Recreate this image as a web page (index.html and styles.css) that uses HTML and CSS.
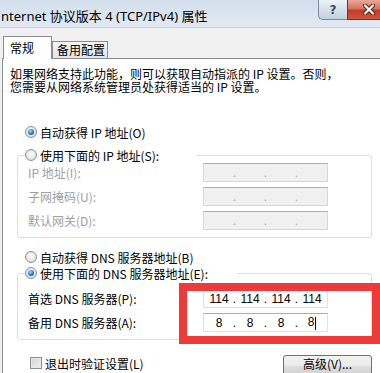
FILE: index.html
```html
<!DOCTYPE html>
<html lang="zh-CN">
<head>
  <meta charset="UTF-8">
  <meta name="viewport" content="width=device-width, initial-scale=1.0">
  <title>Internet 协议版本 4 (TCP/IPv4) 属性</title>
  <link rel="stylesheet" href="styles.css">
</head>
<body>
  <div class="titlebar">
    <div class="title">nternet 协议版本 4 (TCP/IPv4) 属性</div>
    <div class="caption-buttons">
      <div class="cap-btn help">?</div>
      <div class="cap-btn close">
        <svg width="12" height="11" viewBox="0 0 12 11">
          <path d="M2 1.5 L10 9.5 M10 1.5 L2 9.5" stroke="#5b2015" stroke-width="4.2" stroke-linecap="round"/>
          <path d="M2 1.5 L10 9.5 M10 1.5 L2 9.5" stroke="#fff" stroke-width="2.2" stroke-linecap="round"/>
        </svg>
      </div>
    </div>
  </div>

  <div class="dialog">
    <div class="tabs">
      <div class="tab active">常规</div>
      <div class="tab">备用配置</div>
    </div>

    <div class="panel">
      <p class="desc">如果网络支持此功能，则可以获取自动指派的 IP 设置。否则，<br>您需要从网络系统管理员处获得适当的 IP 设置。</p>

      <!-- IP 地址 -->
      <div class="option first"><span class="radio on"></span>自动获得 IP 地址(O)</div>
      <fieldset class="group group-ip">
        <legend class="legend-ip"><span class="option"><span class="radio"></span>使用下面的 IP 地址(S):</span></legend>
        <div class="fields">
          <span class="field-label disabled">IP 地址(I):</span>
          <div class="ipbox disabled"><span class="octet"></span><span class="dot">.</span><span class="octet"></span><span class="dot">.</span><span class="octet"></span><span class="dot">.</span><span class="octet"></span></div>
          <span class="field-label disabled">子网掩码(U):</span>
          <div class="ipbox disabled"><span class="octet"></span><span class="dot">.</span><span class="octet"></span><span class="dot">.</span><span class="octet"></span><span class="dot">.</span><span class="octet"></span></div>
          <span class="field-label disabled">默认网关(D):</span>
          <div class="ipbox disabled"><span class="octet"></span><span class="dot">.</span><span class="octet"></span><span class="dot">.</span><span class="octet"></span><span class="dot">.</span><span class="octet"></span></div>
        </div>
      </fieldset>

      <!-- DNS -->
      <div class="option second"><span class="radio"></span>自动获得 DNS 服务器地址(B)</div>
      <fieldset class="group group-dns">
        <legend class="legend-dns"><span class="option"><span class="radio on"></span>使用下面的 DNS 服务器地址(E):</span></legend>
        <div class="fields">
          <span class="field-label">首选 DNS 服务器(P):</span>
          <div class="ipbox"><span class="octet">114</span><span class="dot">.</span><span class="octet">114</span><span class="dot">.</span><span class="octet">114</span><span class="dot">.</span><span class="octet">114</span></div>
          <span class="field-label">备用 DNS 服务器(A):</span>
          <div class="ipbox"><span class="octet">8</span><span class="dot">.</span><span class="octet">8</span><span class="dot">.</span><span class="octet">8</span><span class="dot">.</span><span class="octet">8<i class="caret"></i></span></div>
        </div>
      </fieldset>

      <div class="footer">
        <div class="check"><span class="checkbox"></span>退出时验证设置(L)</div>
        <button class="btn">高级(V)...</button>
      </div>
    </div>
  </div>

  <!-- 红框标注 -->
  <div class="highlight"></div>
</body>
</html>
```

FILE: styles.css
```css
* {
  box-sizing: border-box;
}

body {
  margin: 0;
  width: 380px;
  height: 373px;
  overflow: hidden;
  position: relative;
  background-color: #f0f0f0;
  font-family: "Noto Sans CJK SC", "Noto Sans", sans-serif;
  font-size: 12px;
  color: #000;
}

/* title bar */
.titlebar {
  display: flex;
  height: 28px;
  background: linear-gradient(#d3dfed, #e1e9f3);
  border-bottom: 1px solid #c9d3de;
}

.title {
  padding: 6px 0 0 1px;
  font-family: "Noto Sans", "Noto Sans CJK SC", sans-serif;
  font-size: 13px;
  white-space: nowrap;
}

.caption-buttons {
  display: flex;
  margin-left: auto;
  margin-right: -10px;
  height: 20px;
}

.cap-btn {
  display: flex;
  align-items: center;
  justify-content: center;
  border: 1px solid #7c8a9c;
  border-top: none;
}

.cap-btn.help {
  width: 29px;
  border-radius: 0 0 0 5px;
  border-right: none;
  background: linear-gradient(#eef3f8, #d6e0eb 50%, #c5d1de);
  color: #3c4a5c;
  font-family: "DejaVu Sans", sans-serif;
  font-weight: bold;
  font-size: 12px;
}

.cap-btn.close {
  width: 43px;
  border-color: #7d2f22;
  background: linear-gradient(#eaa898, #d8715d 45%, #c23c26 55%, #d0553c);
}

/* tabs */
.dialog {
  padding: 8px 0 0 2px;
}

.tabs {
  display: flex;
  align-items: flex-end;
  height: 22px;
  margin-left: 1px;
}

.tab {
  height: 17px;
  width: 56px;
  padding-left: 4px;
  line-height: 15px;
  border: 1px solid #898c95;
  border-bottom: none;
  background: linear-gradient(#f5f5f5, #e4e4e4);
}

.tab.active {
  position: relative;
  z-index: 1;
  width: 49px;
  height: 23px;
  margin-bottom: -1px;
  padding-left: 6px;
  line-height: 21px;
  background: #fff;
}

.panel {
  width: 420px;
  height: 330px;
  padding: 8px 0 0 7px;
  background: #fff;
  border: 1px solid #898c95;
}

.desc {
  margin: 0;
  line-height: 13px;
  white-space: nowrap;
}

/* radio rows */
.option {
  display: flex;
  align-items: center;
  gap: 3px;
  height: 16px;
  white-space: nowrap;
}

.option.first {
  margin: 31px 0 0 15px;
}

.option.second {
  margin: 11px 0 0 15px;
}

.radio {
  flex: none;
  display: flex;
  align-items: center;
  justify-content: center;
  width: 12px;
  height: 12px;
  border-radius: 50%;
  border: 1px solid #8d9197;
  background: radial-gradient(circle at 50% 40%, #fdfdfd, #e2e2e2 65%, #cbcbcb);
}

.radio.on::after {
  content: "";
  width: 6px;
  height: 6px;
  border-radius: 50%;
  background: radial-gradient(circle at 40% 35%, #9be2ff, #2478c4 55%, #0c3c72);
}

/* group boxes */
.group {
  width: 355px;
  margin: 7px 0 0 7px;
  padding: 0;
  border: 1px solid #d5dfe5;
  border-radius: 3px;
}

.group-dns {
  margin-top: 0;
}

.group legend {
  margin-left: 7px;
  padding: 0;
  height: 16px;
}

.legend-ip {
  width: 172px;
}

.legend-dns {
  width: 212px;
}

.fields {
  display: grid;
  grid-template-columns: 175px 125px;
  row-gap: 5px;
  align-items: center;
  padding: 0 0 7px 10px;
}

.group-dns .fields {
  padding-top: 8px;
}

.field-label {
  white-space: nowrap;
}

.disabled {
  color: #a0a0a0;
}

/* IP address control */
.ipbox {
  display: flex;
  align-items: center;
  height: 19px;
  padding-left: 2px;
  background: #fff;
  border: 1px solid #dde2e8;
  border-top-color: #abadb3;
  font-family: "Liberation Sans", sans-serif;
  font-size: 12px;
}

.ipbox.disabled {
  background: #f0f0f0;
  border-color: #d6d6d6;
  border-top-color: #acacac;
}

.octet {
  width: 26px;
  text-align: center;
}

.dot {
  width: 5px;
  text-align: center;
}

.caret {
  display: inline-block;
  width: 1px;
  height: 13px;
  margin-left: 1px;
  vertical-align: middle;
  background: #000;
}

/* footer */
.footer {
  display: flex;
  justify-content: space-between;
  align-items: flex-start;
  width: 362px;
  margin-top: 15px;
}

.check {
  display: flex;
  align-items: center;
  gap: 3px;
  height: 14px;
  margin: 1px 0 0 20px;
}

.checkbox {
  width: 12px;
  height: 12px;
  border: 1px solid #8f8f8f;
  background: linear-gradient(135deg, #d2d2d2, #f2f2f2);
  box-shadow: inset 0 0 0 1px #e8e8e8;
}

.btn {
  width: 89px;
  height: 23px;
  padding: 0 0 6px;
  line-height: 14px;
  border: 1px solid #707070;
  border-radius: 3px;
  background: linear-gradient(#f2f2f2, #ebebeb 50%, #dddddd 50%, #cfcfcf);
  font-family: inherit;
  font-size: 12px;
  color: #000;
}

/* red annotation box */
.highlight {
  position: absolute;
  left: 179px;
  top: 283px;
  width: 201px;
  height: 61px;
  border: 8px solid #ef3a3a;
}
```
